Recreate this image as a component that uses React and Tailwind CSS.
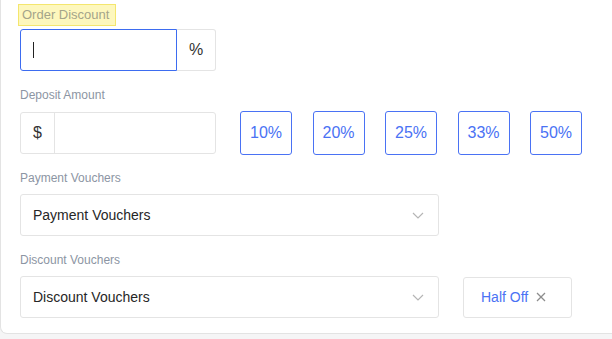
import React from "react";

const Chevron = () => (
  <svg width="12" height="7" viewBox="0 0 12 7" fill="none">
    <polyline points="1,1 6,6 11,1" stroke="#b5b5b5" strokeWidth="1.2" fill="none" />
  </svg>
);

const XIcon = () => (
  <svg width="10" height="10" viewBox="0 0 10 10" fill="none">
    <line x1="1" y1="1" x2="9" y2="9" stroke="#8d8d8d" strokeWidth="1.3" />
    <line x1="9" y1="1" x2="1" y2="9" stroke="#8d8d8d" strokeWidth="1.3" />
  </svg>
);

export default function App() {
  const pct = ["10%", "20%", "25%", "33%", "50%"];
  return (
    <div
      className="w-[612px] h-[339px] overflow-hidden bg-[#f5f5f6]"
      style={{ fontFamily: '"Liberation Sans", Arial, sans-serif' }}
    >
      <div className="w-[640px] bg-white border-l border-b border-[#e3e3e3] rounded-bl-[7px] pl-[19px] pt-[2px] pb-[15px]">
        <div className="h-[22px]">
          <span className="inline-block -ml-[2px] pl-[3px] w-[98px] h-[22px] leading-[20px] text-[13px] text-[#a4a48a] bg-[#fdf7bd] border border-[#f4e66e]">
            Order Discount
          </span>
        </div>
        <div className="mt-[5px] flex w-[196px] h-[42px]">
          <div className="w-[157px] h-full border border-[#3d6cf0] rounded-l-[3px] flex items-center pl-[12px]">
            <span className="w-px h-[16px] bg-[#222]" />
          </div>
          <div className="flex-1 h-full border border-l-0 border-[#e4e4e4] rounded-r-[3px] flex items-center justify-center text-[16px] text-[#333]">
            %
          </div>
        </div>

        <div className="mt-[15px] h-[18px] leading-[18px] text-[12px] text-[#8c95a3]">Deposit Amount</div>
        <div className="mt-[7px] flex items-center">
          <div className="flex w-[196px] h-[42px] border border-[#e4e4e4] rounded-[3px]">
            <div className="w-[34px] h-full border-r border-[#e4e4e4] flex items-center justify-center text-[16px] text-[#333]">
              $
            </div>
            <div className="flex-1" />
          </div>
          <div className="ml-[24px] flex gap-[20.5px]">
            {pct.map((p) => (
              <div
                key={p}
                className="w-[52px] h-[44px] border border-[#4a72f4] rounded-[3px] flex items-center justify-center text-[16px] text-[#4a72f4]"
              >
                {p}
              </div>
            ))}
          </div>
        </div>

        <div className="mt-[14px] h-[18px] leading-[18px] text-[12px] text-[#8c95a3]">Payment Vouchers</div>
        <div className="mt-[7px] w-[419px] h-[42px] border border-[#e4e4e4] rounded-[3px] flex items-center justify-between pl-[12px] pr-[14px]">
          <span className="text-[14px] text-[#262626]">Payment Vouchers</span>
          <Chevron />
        </div>

        <div className="mt-[15px] h-[18px] leading-[18px] text-[12px] text-[#8c95a3]">Discount Vouchers</div>
        <div className="mt-[7px] flex items-center">
          <div className="w-[419px] h-[42px] border border-[#e4e4e4] rounded-[3px] flex items-center justify-between pl-[12px] pr-[14px]">
            <span className="text-[14px] text-[#262626]">Discount Vouchers</span>
            <Chevron />
          </div>
          <div className="ml-[24px] w-[109px] h-[41px] border border-[#e4e4e4] rounded-[3px] flex items-center pl-[17px] gap-[8px]">
            <span className="text-[14px] text-[#4a72f4]">Half Off</span>
            <XIcon />
          </div>
        </div>
      </div>
    </div>
  );
}
